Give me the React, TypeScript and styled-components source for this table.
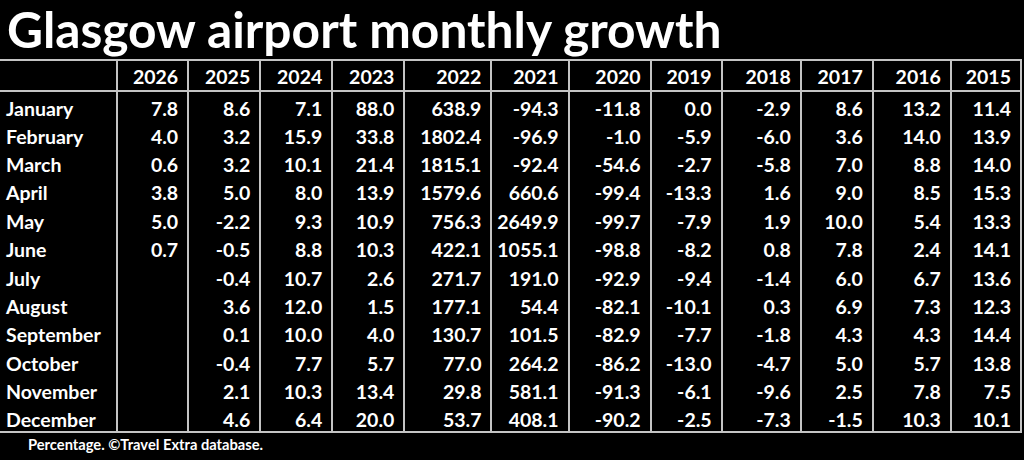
import React from "react";
import styled, { createGlobalStyle } from "styled-components";

const Global = createGlobalStyle`
  html, body { margin: 0; padding: 0; background: #000; }
  body { font-family: "Lato", "Open Sans", "Liberation Sans", sans-serif; }
`;

const Page = styled.div`
  width: 1024px;
  height: 460px;
  background: #000;
  color: #fff;
  overflow: hidden;
  display: flex;
  flex-direction: column;
`;

const Title = styled.h1`
  margin: 0;
  height: 59px;
  padding-left: 7px;
  font-family: "Lato", sans-serif;
  font-weight: 700;
  font-size: 49.7px;
  line-height: 58px;
  letter-spacing: 0;
  white-space: nowrap;
`;

const Table = styled.table`
  width: 1022px;
  table-layout: fixed;
  border-collapse: collapse;
  border-top: 2px solid #c4c4c4;
  border-bottom: 2px solid #c4c4c4;
  border-right: 2px solid #c4c4c4;
  font-family: "Lato", sans-serif;
  font-weight: 700;
  font-size: 19.5px;
`;

const HeadRow = styled.tr`
  height: 31px;
  border-bottom: 2px solid #c4c4c4;
`;

const BodyRow = styled.tr`
  height: 28.4px;
`;

const Cell = styled.td<{ $first?: boolean }>`
  padding: 6px ${(p) => (p.$first ? "0 0 6px" : "9px 0 0")};
  text-align: ${(p) => (p.$first ? "left" : "right")};
  border-left: ${(p) => (p.$first ? "none" : "2px solid #c4c4c4")};
  white-space: nowrap;
  line-height: 20px;
  vertical-align: middle;
`;

const HeadCell = styled(Cell).attrs({ as: "th" })`
  font-weight: 700;
  padding-top: 2px;
  padding-bottom: 0;
`;

const Footer = styled.div`
  padding-left: 28px;
  padding-top: 1px;
  font-family: "Lato", sans-serif;
  font-weight: 700;
  font-size: 14.7px;
  line-height: 20px;
`;

const widths = [117, 71, 72, 72, 72, 87, 77, 82, 71, 79, 72, 78, 70];
const years = ["2026", "2025", "2024", "2023", "2022", "2021", "2020", "2019", "2018", "2017", "2016", "2015"];

const rows: [string, string[]][] = [
  ["January", ["7.8", "8.6", "7.1", "88.0", "638.9", "-94.3", "-11.8", "0.0", "-2.9", "8.6", "13.2", "11.4"]],
  ["February", ["4.0", "3.2", "15.9", "33.8", "1802.4", "-96.9", "-1.0", "-5.9", "-6.0", "3.6", "14.0", "13.9"]],
  ["March", ["0.6", "3.2", "10.1", "21.4", "1815.1", "-92.4", "-54.6", "-2.7", "-5.8", "7.0", "8.8", "14.0"]],
  ["April", ["3.8", "5.0", "8.0", "13.9", "1579.6", "660.6", "-99.4", "-13.3", "1.6", "9.0", "8.5", "15.3"]],
  ["May", ["5.0", "-2.2", "9.3", "10.9", "756.3", "2649.9", "-99.7", "-7.9", "1.9", "10.0", "5.4", "13.3"]],
  ["June", ["0.7", "-0.5", "8.8", "10.3", "422.1", "1055.1", "-98.8", "-8.2", "0.8", "7.8", "2.4", "14.1"]],
  ["July", ["", "-0.4", "10.7", "2.6", "271.7", "191.0", "-92.9", "-9.4", "-1.4", "6.0", "6.7", "13.6"]],
  ["August", ["", "3.6", "12.0", "1.5", "177.1", "54.4", "-82.1", "-10.1", "0.3", "6.9", "7.3", "12.3"]],
  ["September", ["", "0.1", "10.0", "4.0", "130.7", "101.5", "-82.9", "-7.7", "-1.8", "4.3", "4.3", "14.4"]],
  ["October", ["", "-0.4", "7.7", "5.7", "77.0", "264.2", "-86.2", "-13.0", "-4.7", "5.0", "5.7", "13.8"]],
  ["November", ["", "2.1", "10.3", "13.4", "29.8", "581.1", "-91.3", "-6.1", "-9.6", "2.5", "7.8", "7.5"]],
  ["December", ["", "4.6", "6.4", "20.0", "53.7", "408.1", "-90.2", "-2.5", "-7.3", "-1.5", "10.3", "10.1"]],
];

export default function App() {
  return (
    <Page>
      <Global />
      <Title>Glasgow airport monthly growth</Title>
      <Table>
        <colgroup>
          {widths.map((w, i) => (
            <col key={i} style={{ width: w }} />
          ))}
        </colgroup>
        <thead>
          <HeadRow>
            <HeadCell $first />
            {years.map((y) => (
              <HeadCell key={y}>{y}</HeadCell>
            ))}
          </HeadRow>
        </thead>
        <tbody>
          {rows.map(([m, vals]) => (
            <BodyRow key={m}>
              <Cell $first>{m}</Cell>
              {vals.map((v, i) => (
                <Cell key={i}>{v}</Cell>
              ))}
            </BodyRow>
          ))}
        </tbody>
      </Table>
      <Footer>Percentage. ©Travel Extra database.</Footer>
    </Page>
  );
}
